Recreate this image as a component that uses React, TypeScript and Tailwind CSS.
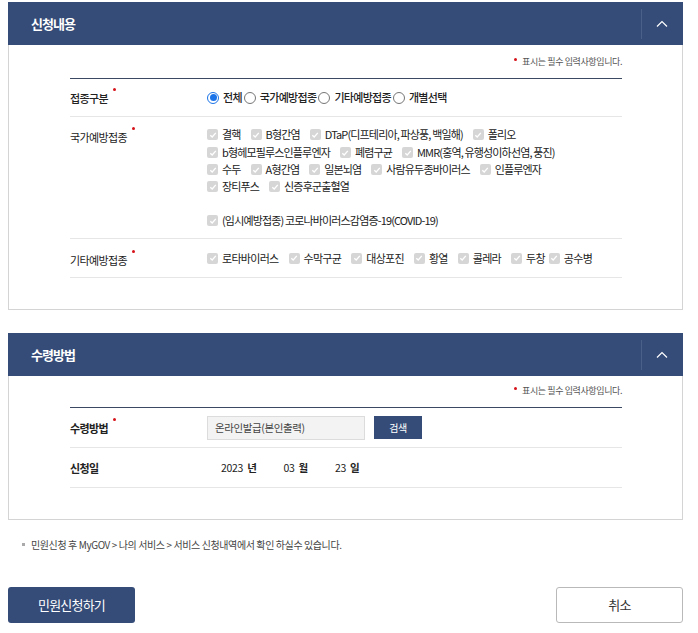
import React from "react";

const FONT = { fontFamily: '"Noto Sans CJK KR", "Noto Sans", sans-serif' };

function Dot({ className = "" }: { className?: string }) {
  return <span className={"inline-block w-[3px] h-[3px] rounded-full bg-[#d6121a] " + className} />;
}

function Label({ text, bold, required }: { text: string; bold?: string; required?: boolean }) {
  return (
    <div className={"w-[137px] shrink-0 flex items-start text-[11px] tracking-[-0.6px] leading-[14px] text-[#222] " + (bold ?? "")}>
      <span>{text}</span>
      {required && <Dot className="ml-[5px] -mt-[3px]" />}
    </div>
  );
}

function Check({ text, gap = "mr-[10px]" }: { text: string; gap?: string }) {
  return (
    <span className={"inline-flex items-center " + gap}>
      <span className="w-[11px] h-[11px] rounded-[2px] bg-[#d6d6d6] flex items-center justify-center mr-[4px]">
        <svg width="8" height="8" viewBox="0 0 8 8">
          <polyline points="1.3,4.2 3.2,6 6.8,1.8" fill="none" stroke="#fff" strokeWidth="1.3" />
        </svg>
      </span>
      <span>{text}</span>
    </span>
  );
}

function Radio({ text, checked }: { text: string; checked?: boolean }) {
  return (
    <span className="inline-flex items-center mr-[2px]">
      <span
        className={
          "w-[12px] h-[12px] rounded-full border flex items-center justify-center mr-[4px] bg-white " +
          (checked ? "border-[#1a73e8]" : "border-[#767676]")
        }
      >
        {checked && <span className="w-[7px] h-[7px] rounded-full bg-[#1a73e8]" />}
      </span>
      <span>{text}</span>
    </span>
  );
}

function Header({ title }: { title: string }) {
  return (
    <div className="h-[43px] bg-[#354c78] flex items-center">
      <div className="flex-1 pl-[23px] text-white font-bold text-[13px] tracking-[-1px]">{title}</div>
      <div className="w-[1px] h-[30px] bg-[#4b6088]" />
      <div className="w-[41px] flex items-center justify-center pr-[2px]">
        <svg width="12" height="8" viewBox="0 0 12 8">
          <polyline points="1,6.5 6,1.5 11,6.5" fill="none" stroke="#fff" strokeWidth="1.2" />
        </svg>
      </div>
    </div>
  );
}

function Notice() {
  return (
    <div className="flex justify-end items-center h-[14px] mb-[9px] text-[9px] text-[#555] tracking-[-0.4px]">
      <Dot className="-mt-[6px] mr-[5px]" />
      <span>표시는 필수 입력사항입니다.</span>
    </div>
  );
}

export default function App() {
  return (
    <div className="w-[698px] h-[633px] bg-white pt-[2px] px-[8px] overflow-hidden" style={FONT}>
      <div className="w-[675px]">
        <Header title="신청내용" />
        <div className="border border-t-0 border-[#d4d4d4] pl-[61px] pr-[60px] pt-[10px] pb-[31px]">
          <Notice />
          <div className="border-t border-[#3b4a62]">
            <div className="h-[38px] flex items-center border-b border-[#e6e6e6]">
              <Label text="접종구분" bold="font-medium" required />
              <div className="flex items-center text-[11px] tracking-[-0.7px] font-medium text-[#222]">
                <Radio text="전체" checked />
                <Radio text="국가예방접종" />
                <Radio text="기타예방접종" />
                <Radio text="개별선택" />
              </div>
            </div>
            <div className="flex pt-[8px] pb-[9px] border-b border-[#e6e6e6]">
              <div className="pt-[5px]">
                <Label text="국가예방접종" required />
              </div>
              <div className="flex flex-col text-[11px] tracking-[-0.85px] text-[#222]">
                <div className="h-[19px] flex items-center">
                  <Check text="결핵" />
                  <Check text="B형간염" />
                  <Check text="DTaP(디프테리아, 파상풍, 백일해)" />
                  <Check text="폴리오" />
                </div>
                <div className="h-[17px] flex items-center">
                  <Check text="b형헤모필루스인플루엔자" />
                  <Check text="폐렴구균" />
                  <Check text="MMR(홍역, 유행성이하선염, 풍진)" />
                </div>
                <div className="h-[17px] flex items-center">
                  <Check text="수두" />
                  <Check text="A형간염" />
                  <Check text="일본뇌염" />
                  <Check text="사람유두종바이러스" />
                  <Check text="인플루엔자" />
                </div>
                <div className="h-[17px] flex items-center">
                  <Check text="장티푸스" />
                  <Check text="신증후군출혈열" />
                </div>
                <div className="h-[17px]" />
                <div className="h-[17px] flex items-center">
                  <Check text="(임시예방접종) 코로나바이러스감염증-19(COVID-19)" />
                </div>
              </div>
            </div>
            <div className="h-[39px] flex items-center border-b border-[#e6e6e6]">
              <div className="pt-[3px]">
                <Label text="기타예방접종" required />
              </div>
              <div className="flex items-center text-[11px] tracking-[-0.7px] text-[#222]">
                <Check text="로타바이러스" />
                <Check text="수막구균" />
                <Check text="대상포진" />
                <Check text="황열" />
                <Check text="콜레라" />
                <Check text="두창" gap="mr-[4px]" />
                <Check text="공수병" />
              </div>
            </div>
          </div>
        </div>

        <div className="h-[23px]" />

        <Header title="수령방법" />
        <div className="border border-t-0 border-[#d4d4d4] pl-[61px] pr-[60px] pt-[8px] pb-[31px]">
          <Notice />
          <div className="border-t border-[#3b4a62]">
            <div className="h-[40px] flex items-center border-b border-[#e6e6e6]">
              <Label text="수령방법" bold="font-bold" required />
              <div className="w-[158px] h-[24px] bg-[#f3f3f3] border border-[#dcdcdc] flex items-center pl-[7px] text-[10.5px] tracking-[-0.4px] text-[#444]">
                온라인발급(본인출력)
              </div>
              <button className="ml-[9px] w-[48px] h-[23px] bg-[#354c78] text-white text-[10px] tracking-[-0.4px]">
                검색
              </button>
            </div>
            <div className="h-[40px] flex items-center border-b border-[#e6e6e6]">
              <Label text="신청일" bold="font-bold" />
              <div className="pl-[14px] flex items-center text-[10.5px] tracking-[-0.3px] text-[#222]">
                <span>2023</span>
                <span className="ml-[4px] font-bold mr-[27px]">년</span>
                <span>03</span>
                <span className="ml-[4px] font-bold mr-[27px]">월</span>
                <span>23</span>
                <span className="ml-[4px] font-bold">일</span>
              </div>
            </div>
          </div>
        </div>

        <div className="mt-[17px] flex items-center pl-[14px] text-[10px] tracking-[-0.4px] text-[#444] h-[14px]">
          <span className="w-[3px] h-[3px] bg-[#aaa] mr-[6px]" />
          <span>민원신청 후 MyGOV &gt; 나의 서비스 &gt; 서비스 신청내역에서 확인 하실수 있습니다.</span>
        </div>

        <div className="mt-[36px] flex justify-between">
          <button className="w-[127px] h-[36px] rounded-[3px] bg-[#354c78] text-white text-[13px] tracking-[-0.8px]">
            민원신청하기
          </button>
          <button className="w-[127px] h-[36px] rounded-[3px] bg-white border border-[#b9b9b9] text-[#333] text-[13px] tracking-[-0.8px]">
            취소
          </button>
        </div>
      </div>
    </div>
  );
}
